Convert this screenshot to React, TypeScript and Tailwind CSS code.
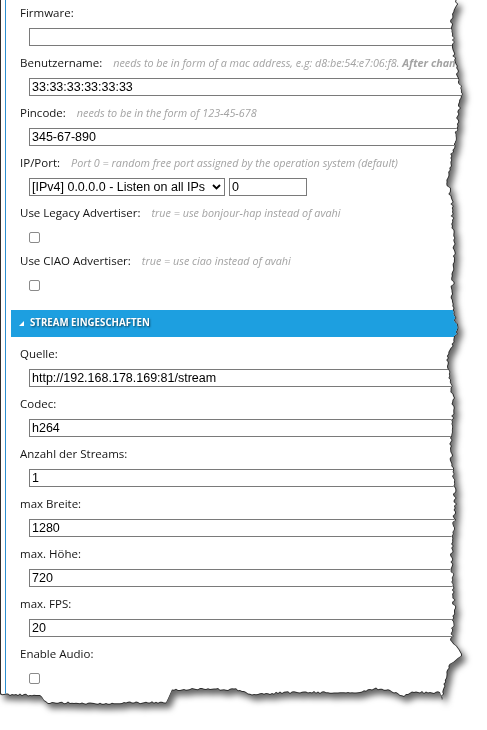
import { useMemo } from "react";

const W = 470;
const H = 712;

function mulberry(seed: number) {
  let a = seed;
  return () => {
    a |= 0;
    a = (a + 0x6d2b79f5) | 0;
    let t = Math.imul(a ^ (a >>> 15), 1 | a);
    t = (t + Math.imul(t ^ (t >>> 7), 61 | t)) ^ t;
    return ((t ^ (t >>> 14)) >>> 0) / 4294967296;
  };
}

function interp(pts: number[][], v: number) {
  for (let i = 0; i < pts.length - 1; i++) {
    const [a, av] = pts[i];
    const [b, bv] = pts[i + 1];
    if ((v >= a && v <= b) || (v <= a && v >= b)) {
      const t = b === a ? 0 : (v - a) / (b - a);
      return av + (bv - av) * t;
    }
  }
  return pts[pts.length - 1][1];
}

// right edge: [y, x]
const RIGHT = [
  [0, 458], [20, 452], [60, 455], [90, 462], [130, 457], [180, 448], [200, 452],
  [260, 455], [300, 452], [330, 458], [360, 447], [400, 454], [450, 451], [500, 456],
  [560, 452], [610, 455], [640, 452], [655, 462], [665, 450], [680, 446], [700, 442],
];
// bottom edge: [x, y]
const BOTTOM = [
  [442, 700], [441, 693], [410, 693], [402, 697], [392, 692], [376, 689], [360, 693],
  [290, 693], [250, 695], [236, 690], [172, 690], [166, 703], [100, 704], [46, 703],
  [40, 696], [0, 695],
];

function tornPath(inset: number) {
  const r = mulberry(7);
  const pts: string[] = [];
  pts.push(`${inset}px 0px`);
  for (let y = 0; y <= 700; y += 2) {
    const x = interp(RIGHT, y) + (r() - 0.5) * 3 - inset;
    pts.push(`${x.toFixed(1)}px ${y}px`);
  }
  for (let x = 442; x >= 0; x -= 2) {
    const y = interp(BOTTOM, x) + (r() - 0.5) * 2 - inset;
    pts.push(`${Math.max(x, inset).toFixed(1)}px ${y.toFixed(1)}px`);
  }
  return `polygon(${pts.join(", ")})`;
}

const labelCls = "h-4 leading-4 text-[11.5px] text-[#141414] font-['Open_Sans',sans-serif] whitespace-nowrap";
const hintCls = "ml-[11px] text-[10.8px] italic text-[#a3a3a3] font-['Open_Sans',sans-serif]";
const inputCls =
  "block h-[18px] border border-[#7a7a7a] bg-white pl-[2px] text-[12.5px] text-black font-['Liberation_Sans',Arial,sans-serif] leading-4 outline-none";

function Label({ text, hint }: { text: string; hint?: React.ReactNode }) {
  return (
    <div className={`${labelCls} flex items-center`}>
      <span>{text}</span>
      {hint && <span className={hintCls}>{hint}</span>}
    </div>
  );
}

function TextField({ label, hint, value }: { label: string; hint?: React.ReactNode; value: string }) {
  return (
    <div className="pl-[9px] pb-[9px]">
      <Label text={label} hint={hint} />
      <input className={`${inputCls} ml-[9px] mt-[7px] w-[440px]`} defaultValue={value} />
    </div>
  );
}

function CheckField({ label, hint, last }: { label: string; hint?: string; last?: boolean }) {
  return (
    <div className={`pl-[9px] ${last ? "" : "pb-[10px]"}`}>
      <Label text={label} hint={hint} />
      <input
        type="checkbox"
        className="ml-[9px] mt-[11px] block h-[11px] w-[11px] appearance-none rounded-[2px] border border-[#8a8a8a] bg-white"
      />
    </div>
  );
}

export default function App() {
  const outer = useMemo(() => tornPath(0), []);
  const inner = useMemo(() => tornPath(1), []);

  return (
    <div className="h-[730px] w-[487px] overflow-hidden bg-white">
      <div className="h-[712px] w-[470px] drop-shadow-[4px_5px_3px_rgba(0,0,0,0.6)]">
        <div className="h-full w-full bg-[#2e2e2e]" style={{ clipPath: outer, width: W, height: H }}>
          <div className="h-full w-full bg-white" style={{ clipPath: inner }}>
            <div className="ml-[5px] h-full border-l border-[#2b8fd0] pl-[5px] pt-[5px]">
              <TextField label="Firmware:" value="" />
              <TextField
                label="Benutzername:"
                hint={
                  <>
                    needs to be in form of a mac address, e.g: d8:be:54:e7:06:f8.{" "}
                    <span className="font-bold">After chan</span>
                  </>
                }
                value="33:33:33:33:33:33"
              />
              <TextField label="Pincode:" hint="needs to be in the form of 123-45-678" value="345-67-890" />

              <div className="pl-[9px] pb-[9px]">
                <Label text="IP/Port:" hint="Port 0 = random free port assigned by the operation system (default)" />
                <div className="ml-[9px] mt-[7px] flex gap-[4px]">
                  <div className="relative h-[18px] w-[196px]">
                    <select
                      className={`${inputCls} w-full appearance-none pr-4`}
                      defaultValue="all"
                    >
                      <option value="all">[IPv4] 0.0.0.0 - Listen on all IPs</option>
                    </select>
                    <svg
                      width="9"
                      height="6"
                      viewBox="0 0 9 6"
                      className="pointer-events-none absolute right-[4px] top-[6px]"
                    >
                      <path d="M1 1 L4.5 4.5 L8 1" stroke="#000" strokeWidth="1.8" fill="none" />
                    </svg>
                  </div>
                  <input className={`${inputCls} w-[78px]`} defaultValue="0" />
                </div>
              </div>

              <CheckField label="Use Legacy Advertiser:" hint="true = use bonjour-hap instead of avahi" />
              <CheckField label="Use CIAO Advertiser:" hint="true = use ciao instead of avahi" last />

              <div className="mt-[19px] flex h-[27px] items-center bg-[#1d9fe0] pl-[8px]">
                <svg width="5" height="5" viewBox="0 0 5 5" className="mr-[6px]">
                  <polygon points="0,5 5,0 5,5" fill="#fff" />
                </svg>
                <span className="text-[9.7px] font-bold uppercase text-white font-['Open_Sans',sans-serif] [text-shadow:1px_1px_2px_rgba(0,0,0,0.6)]">
                  Stream Eingeschaften
                </span>
              </div>

              <div className="pt-[9px]">
                <TextField label="Quelle:" value="http://192.168.178.169:81/stream" />
                <TextField label="Codec:" value="h264" />
                <TextField label="Anzahl der Streams:" value="1" />
                <TextField label="max Breite:" value="1280" />
                <TextField label="max. Höhe:" value="720" />
                <TextField label="max. FPS:" value="20" />
                <CheckField label="Enable Audio:" last />
              </div>
            </div>
          </div>
        </div>
      </div>
    </div>
  );
}
